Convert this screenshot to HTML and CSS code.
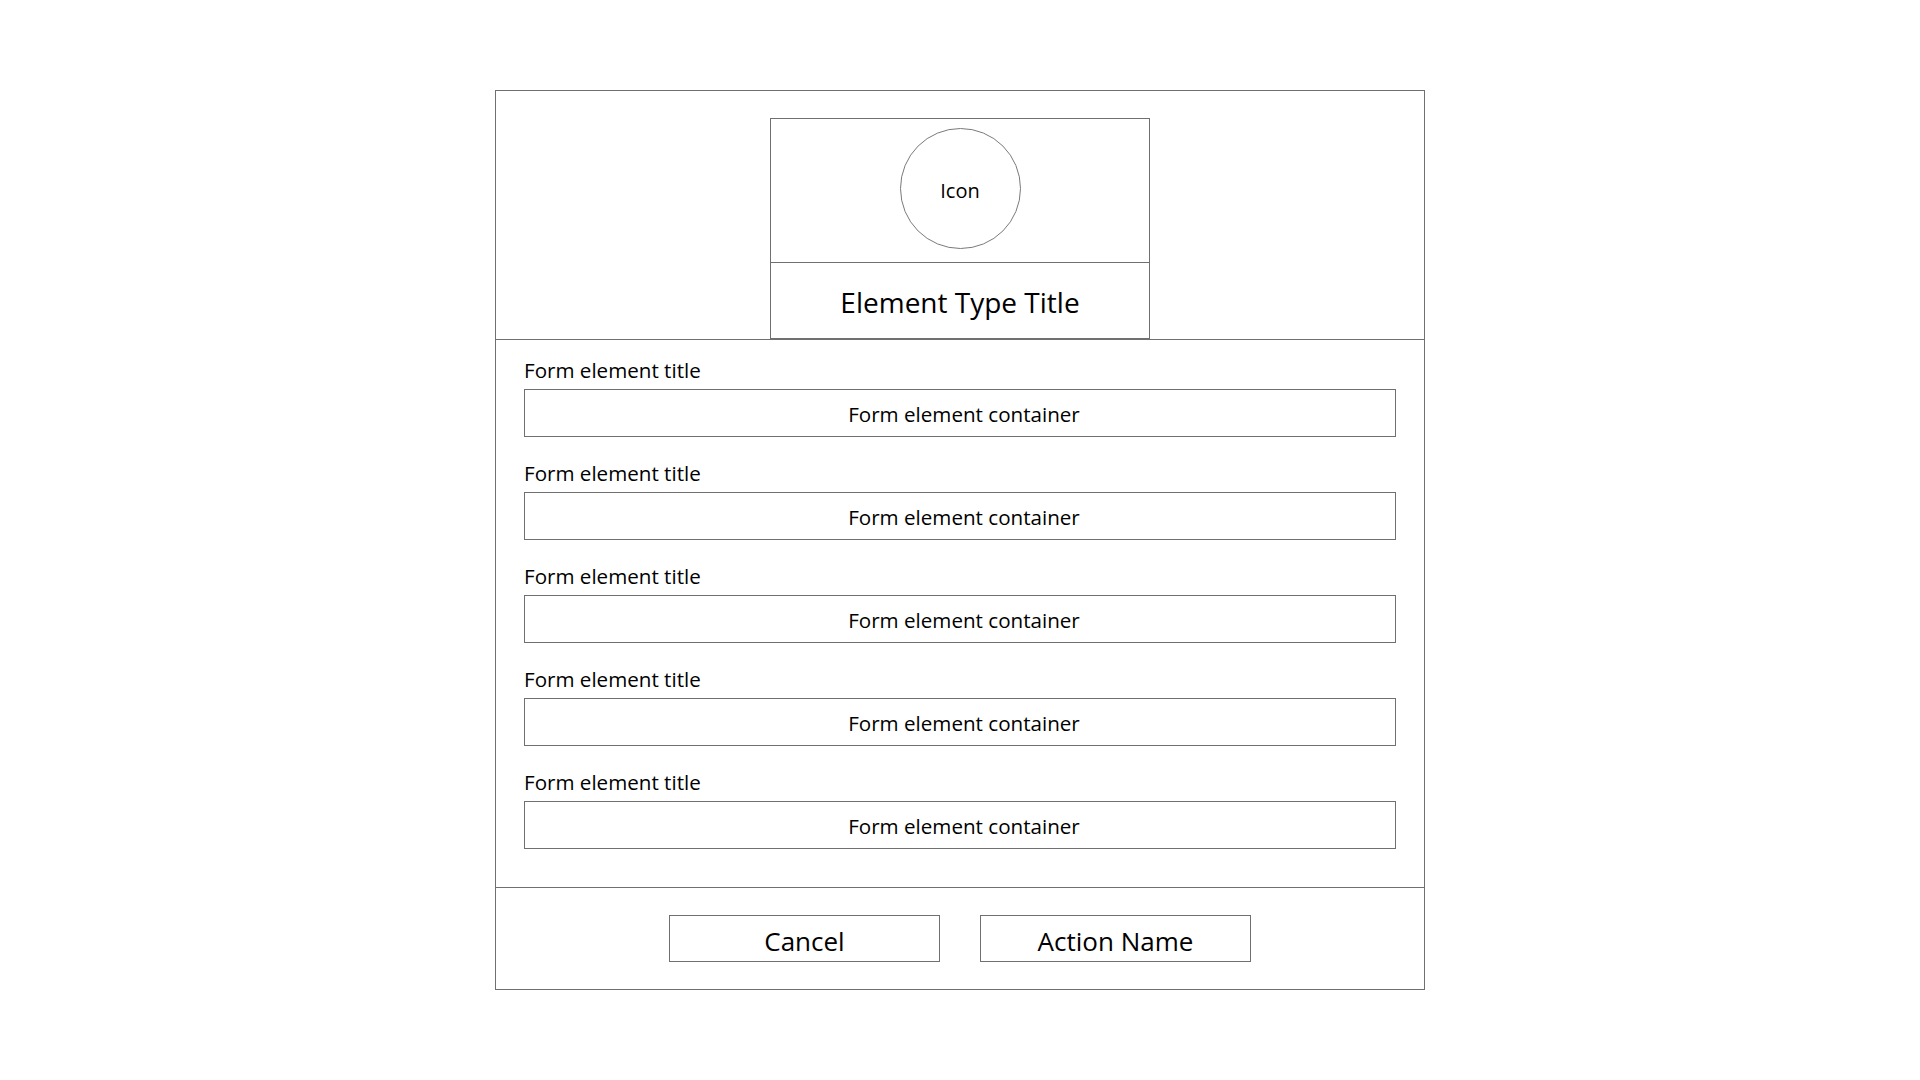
FILE: index.html
```html
<!DOCTYPE html>
<html lang="en">
<head>
<meta charset="utf-8">
<title>Element dialog</title>
<link rel="stylesheet" href="styles.css">
</head>
<body>
<div class="page">
  <div class="dialog">
    <div class="dialog-header">
      <div class="type-card">
        <div class="type-card-icon">
          <div class="icon-circle">Icon</div>
        </div>
        <div class="type-card-title">Element Type Title</div>
      </div>
    </div>
    <div class="dialog-body">
      <div class="field">
        <div class="field-label">Form element title</div>
        <div class="field-box">Form element container</div>
      </div>
      <div class="field">
        <div class="field-label">Form element title</div>
        <div class="field-box">Form element container</div>
      </div>
      <div class="field">
        <div class="field-label">Form element title</div>
        <div class="field-box">Form element container</div>
      </div>
      <div class="field">
        <div class="field-label">Form element title</div>
        <div class="field-box">Form element container</div>
      </div>
      <div class="field">
        <div class="field-label">Form element title</div>
        <div class="field-box">Form element container</div>
      </div>
    </div>
    <div class="dialog-footer">
      <div class="btn">Cancel</div>
      <div class="btn">Action Name</div>
    </div>
  </div>
</div>
</body>
</html>
```

FILE: styles.css
```css
* {
  box-sizing: border-box;
}

html, body {
  margin: 0;
  padding: 0;
  background: #ffffff;
}

body {
  font-family: "Open Sans", "Noto Sans", "Liberation Sans", sans-serif;
  color: #000000;
}

.page {
  display: flex;
  justify-content: center;
  padding-top: 90px;
}

.dialog {
  width: 930px;
  height: 900px;
  border: 1px solid #707070;
  display: flex;
  flex-direction: column;
}

.dialog-header {
  height: 249px;
  padding-top: 27px;
  border-bottom: 1px solid #707070;
  display: flex;
  justify-content: center;
}

.type-card {
  width: 380px;
  height: 221px;
  border: 1px solid #707070;
  display: flex;
  flex-direction: column;
}

.type-card-icon {
  height: 144px;
  border-bottom: 1px solid #707070;
  display: flex;
  justify-content: center;
  padding-top: 9px;
}

.icon-circle {
  width: 121px;
  height: 121px;
  border: 1px solid #7a7a7a;
  border-radius: 50%;
  display: flex;
  align-items: center;
  justify-content: center;
  font-size: 20px;
  padding-top: 4px;
}

.type-card-title {
  flex: 1;
  display: flex;
  align-items: center;
  justify-content: center;
  font-size: 28px;
  padding-top: 3px;
}

.dialog-body {
  height: 548px;
  padding: 16px 28px 0 28px;
  border-bottom: 1px solid #707070;
  display: flex;
  flex-direction: column;
  gap: 22px;
}

.field {
  display: flex;
  flex-direction: column;
  gap: 6px;
}

.field-label {
  font-size: 20.6px;
  line-height: 27px;
  height: 27px;
  padding-top: 1px;
}

.field-box {
  height: 48px;
  border: 1px solid #707070;
  display: flex;
  align-items: center;
  justify-content: center;
  font-size: 20.6px;
  padding-top: 2px;
  padding-left: 8px;
}

.dialog-footer {
  flex: 1;
  display: flex;
  justify-content: center;
  align-items: flex-start;
  padding-top: 27px;
  gap: 40px;
}

.btn {
  width: 271px;
  height: 47px;
  border: 1px solid #707070;
  display: flex;
  align-items: center;
  justify-content: center;
  font-size: 26px;
  padding-top: 4px;
}
```
